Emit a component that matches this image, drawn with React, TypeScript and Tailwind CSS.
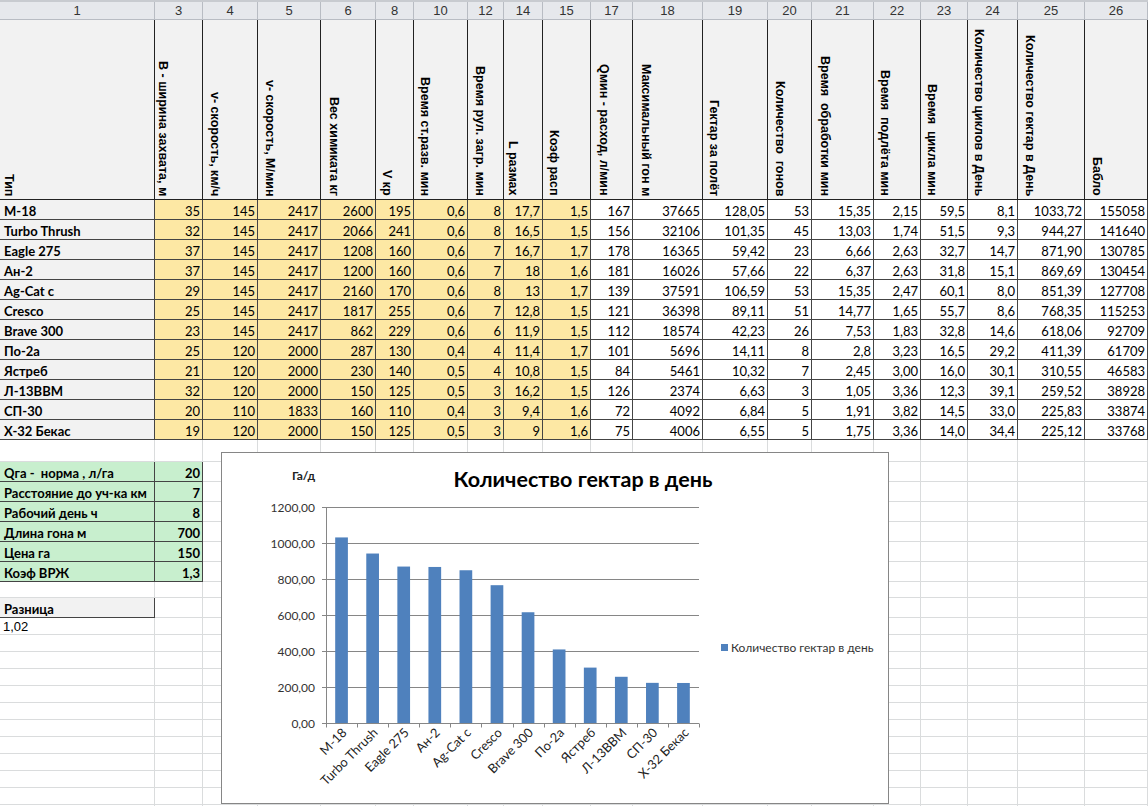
import React from "react";

const GRID =
  "grid grid-cols-[155px_48px_55px_63px_55px_38px_54px_36px_39px_48px_42px_70px_65px_44px_62px_47px_47px_50px_67px_63px]";

const colNums = ["1", "3", "4", "5", "6", "8", "10", "12", "14", "15", "17", "18", "19", "20", "21", "22", "23", "24", "25", "26"];

const headers: { t: string; p: string }[] = [
  { t: "Тип", p: "pl-[2px]" },
  { t: "В - ширина захвата, м", p: "pl-[1px]" },
  { t: "v- скорость, км/ч", p: "pl-[5px]" },
  { t: "v- скорость, М/мин", p: "pl-[5px]" },
  { t: "Вес химиката кг", p: "pl-[6px]" },
  { t: "V кр", p: "pl-[4px]" },
  { t: "Время ст.разв. мин", p: "pl-[4px]" },
  { t: "Время рул. загр. мин", p: "pl-[5px]" },
  { t: "L размах", p: "pl-[2px]" },
  { t: "Коэф расп", p: "pl-[4px]" },
  { t: "Qмин - расход, л/мин", p: "pl-[6px]" },
  { t: "Максимальный гон м", p: "pl-[6px]" },
  { t: "Гектар за полёт", p: "pl-[4px]" },
  { t: "Количество  гонов", p: "pl-[5px]" },
  { t: "Время  обработки мин", p: "pl-[6px]" },
  { t: "Время  подлёта мин", p: "pl-[4px]" },
  { t: "Время  цикла мин", p: "pl-[4px]" },
  { t: "Количество циклов в День", p: "pl-[4px]" },
  { t: "Количество гектар в День", p: "pl-[5px]" },
  { t: "Бабло", p: "pl-[5px]" },
];

const rows: (string | number)[][] = [
  ["M-18", 35, 145, 2417, 2600, 195, "0,6", 8, "17,7", "1,5", 167, 37665, "128,05", 53, "15,35", "2,15", "59,5", "8,1", "1033,72", 155058],
  ["Turbo Thrush", 32, 145, 2417, 2066, 241, "0,6", 8, "16,5", "1,5", 156, 32106, "101,35", 45, "13,03", "1,74", "51,5", "9,3", "944,27", 141640],
  ["Eagle 275", 37, 145, 2417, 1208, 160, "0,6", 7, "16,7", "1,7", 178, 16365, "59,42", 23, "6,66", "2,63", "32,7", "14,7", "871,90", 130785],
  ["Ан-2", 37, 145, 2417, 1200, 160, "0,6", 7, "18", "1,6", 181, 16026, "57,66", 22, "6,37", "2,63", "31,8", "15,1", "869,69", 130454],
  ["Ag-Cat c", 29, 145, 2417, 2160, 170, "0,6", 8, "13", "1,7", 139, 37591, "106,59", 53, "15,35", "2,47", "60,1", "8,0", "851,39", 127708],
  ["Cresco", 25, 145, 2417, 1817, 255, "0,6", 7, "12,8", "1,5", 121, 36398, "89,11", 51, "14,77", "1,65", "55,7", "8,6", "768,35", 115253],
  ["Brave 300", 23, 145, 2417, 862, 229, "0,6", 6, "11,9", "1,5", 112, 18574, "42,23", 26, "7,53", "1,83", "32,8", "14,6", "618,06", 92709],
  ["По-2а", 25, 120, 2000, 287, 130, "0,4", 4, "11,4", "1,7", 101, 5696, "14,11", 8, "2,8", "3,23", "16,5", "29,2", "411,39", 61709],
  ["Ястреб", 21, 120, 2000, 230, 140, "0,5", 4, "10,8", "1,5", 84, 5461, "10,32", 7, "2,45", "3,00", "16,0", "30,1", "310,55", 46583],
  ["Л-13ВВМ", 32, 120, 2000, 150, 125, "0,5", 3, "16,2", "1,5", 126, 2374, "6,63", 3, "1,05", "3,36", "12,3", "39,1", "259,52", 38928],
  ["СП-30", 20, 110, 1833, 160, 110, "0,4", 3, "9,4", "1,6", 72, 4092, "6,84", 5, "1,91", "3,82", "14,5", "33,0", "225,83", 33874],
  ["Х-32 Бекас", 19, 120, 2000, 150, 125, "0,5", 3, "9", "1,6", 75, 4006, "6,55", 5, "1,75", "3,36", "14,0", "34,4", "225,12", 33768],
];

const params: [string, string][] = [
  ["Qга -  норма , л/га", "20"],
  ["Расстояние до уч-ка км", "7"],
  ["Рабочий день ч", "8"],
  ["Длина гона м", "700"],
  ["Цена га", "150"],
  ["Коэф ВРЖ", "1,3"],
];

const names = ["M-18", "Turbo Thrush", "Eagle 275", "Ан-2", "Ag-Cat c", "Cresco", "Brave 300", "По-2а", "Ястреб", "Л-13ВВМ", "СП-30", "Х-32 Бекас"];
const vals = [1033.72, 944.27, 871.9, 869.69, 851.39, 768.35, 618.06, 411.39, 310.55, 259.52, 225.83, 225.12];

const TXT = "pt-[2px] leading-[18px] whitespace-nowrap overflow-hidden";

function dataCellClass(i: number) {
  if (i === 0) return "h-[20px] border-r border-b border-[#444] bg-[#f2f2f2] pl-[4px] font-bold text-left " + TXT;
  if (i <= 9) return "h-[20px] border-r border-b border-[#444] bg-[#fde8a4] pr-[2px] text-right " + TXT;
  return "h-[20px] border-r border-b border-[#444] bg-white pr-[2px] text-right " + TXT;
}

function EmptyRow({ h }: { h: string }) {
  return (
    <div className={GRID}>
      {colNums.map((c) => (
        <div key={c} className={h + " border-r border-b border-[#dadcdd]"} />
      ))}
    </div>
  );
}

function Chart() {
  const X0 = 104;
  const X1 = 477;
  const YB = 270.5;
  const step = 36;
  const cw = (X1 - X0) / 12;
  const sc = (step * 6) / 1200;
  const levels = [0, 200, 400, 600, 800, 1000, 1200];
  return (
    <div className="absolute left-[221px] top-[452px] w-[668px] h-[352px] border border-[#868686] bg-white">
      <svg width="666" height="350" className="block">
        <text x="70" y="27" fontSize="12" fontWeight="700" fill="#222">Га/д</text>
        <text x="361" y="34" fontSize="21.5" fontWeight="700" fill="#000" textAnchor="middle">
          Количество гектар в день
        </text>
        {levels.map((v, i) => {
          const y = YB - i * step;
          return (
            <g key={v}>
              {i > 0 && <line x1={X0} x2={X1} y1={y} y2={y} stroke="#868686" strokeWidth="1" />}
              <line x1={X0 - 4} x2={X0} y1={y} y2={y} stroke="#868686" strokeWidth="1" />
              <text x="93" y={y + 4} fontSize="12" fill="#333" textAnchor="end">
                {v.toFixed(2).replace(".", ",")}
              </text>
            </g>
          );
        })}
        {vals.map((v, i) => {
          const h = v * sc;
          const bw = 12.7;
          return <rect key={i} x={X0 + i * cw + (cw - bw) / 2} y={YB - h} width={bw} height={h} fill="#4f81bd" />;
        })}
        <line x1={X0 + 0.5} x2={X0 + 0.5} y1={YB - 6 * step} y2={YB} stroke="#868686" strokeWidth="1" />
        <line x1={X0} x2={X1} y1={YB} y2={YB} stroke="#868686" strokeWidth="1" />
        {Array.from({ length: 13 }).map((_, i) => {
          const x = Math.round(X0 + i * cw) + 0.5;
          return <line key={i} x1={x} x2={x} y1={YB} y2={YB + 4} stroke="#868686" strokeWidth="1" />;
        })}
        {names.map((n, i) => {
          const cx = X0 + i * cw + cw / 2;
          return (
            <text
              key={n}
              transform={`translate(${cx + 6},${YB + 10}) rotate(-45)`}
              fontSize="12.8"
              fill="#222"
              textAnchor="end"
            >
              {n}
            </text>
          );
        })}
        <rect x="499" y="191" width="7" height="7" fill="#4f81bd" />
        <text x="509" y="199" fontSize="12" fill="#333">Количество гектар в день</text>
      </svg>
    </div>
  );
}

export default function App() {
  return (
    <div className="relative w-[1148px] h-[806px] overflow-hidden bg-white text-black [font-family:Lato,sans-serif] text-[13px]">
      {/* column letters/numbers */}
      <div className={GRID + " border-t-2 border-[#c8cbd0]"}>
        {colNums.map((c) => (
          <div
            key={c}
            className="h-[18px] flex items-center justify-center border-r border-b border-[#b8bcc3] bg-[#e6e8ec] text-[13px] leading-none text-[#333] [font-family:'Liberation_Sans',sans-serif]"
          >
            {c}
          </div>
        ))}
      </div>
      {/* header row */}
      <div className={GRID}>
        {headers.map((h, i) => (
          <div
            key={i}
            className={"h-[180px] flex items-end justify-start pb-[3px] border-r border-b border-[#222] bg-[#f2f2f2] overflow-hidden " + h.p}
          >
            <span className="[writing-mode:vertical-rl] whitespace-pre font-bold text-[12.5px] leading-[13px] [font-family:'Liberation_Sans',sans-serif]">
              {h.t}
            </span>
          </div>
        ))}
      </div>
      {/* data */}
      {rows.map((r, ri) => (
        <div key={ri} className={GRID}>
          {r.map((v, i) => (
            <div key={i} className={dataCellClass(i)}>
              {v}
            </div>
          ))}
        </div>
      ))}
      <EmptyRow h="h-[22px]" />
      {params.map(([l, v]) => (
        <div key={l} className={GRID}>
          <div className={"h-[20px] border-r border-b border-[#444] bg-[#c8efce] pl-[4px] font-bold " + TXT}>
            <span className="whitespace-pre">{l}</span>
          </div>
          <div className={"h-[20px] border-r border-b border-[#444] bg-[#c8efce] pr-[2px] font-bold text-right " + TXT}>
            {v}
          </div>
          {colNums.slice(2).map((c) => (
            <div key={c} className="h-[20px] border-r border-b border-[#dadcdd]" />
          ))}
        </div>
      ))}
      <EmptyRow h="h-[16px]" />
      <div className={GRID}>
        <div className={"h-[20px] border-r border-b border-[#444] bg-[#f2f2f2] pl-[4px] font-bold " + TXT}>Разница</div>
        {colNums.slice(1).map((c) => (
          <div key={c} className="h-[20px] border-r border-b border-[#dadcdd]" />
        ))}
      </div>
      <div className={GRID}>
        <div className="h-[17px] border-r border-b border-[#dadcdd] pl-[3px] leading-[17px] text-[13px] [font-family:'Liberation_Sans',sans-serif]">
          1,02
        </div>
        {colNums.slice(1).map((c) => (
          <div key={c} className="h-[17px] border-r border-b border-[#dadcdd]" />
        ))}
      </div>
      {Array.from({ length: 11 }).map((_, i) => (
        <EmptyRow key={i} h="h-[17px]" />
      ))}
      <Chart />
    </div>
  );
}
